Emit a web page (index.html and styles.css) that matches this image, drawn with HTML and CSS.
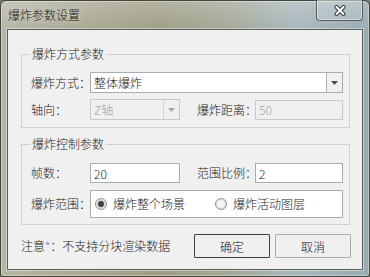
FILE: index.html
```html
<!DOCTYPE html>
<html lang="zh-CN">
<head>
    <meta charset="UTF-8">
    <title>爆炸参数设置</title>
    <link rel="stylesheet" href="styles.css">
</head>
<body>
<div class="window">
    <div class="titlebar">
        <span class="title">爆炸参数设置</span>
        <div class="close-btn">
            <svg width="12" height="11" viewBox="0 0 12 11">
                <path d="M2.5 2 L9.5 9 M9.5 2 L2.5 9" stroke="#3a3c42" stroke-width="4" stroke-linecap="round"/>
                <path d="M2.5 2 L9.5 9 M9.5 2 L2.5 9" stroke="#fff" stroke-width="2" stroke-linecap="round"/>
            </svg>
        </div>
    </div>
    <div class="client">
        <fieldset class="group group-mode">
            <legend>爆炸方式参数</legend>
            <div class="form-grid">
                <label>爆炸方式：</label>
                <div class="combo span-3">
                    <span class="combo-value">整体爆炸</span>
                    <span class="combo-btn">
                        <svg width="7" height="4" viewBox="0 0 7 4"><polygon points="0,0 7,0 3.5,4" fill="#4a4a4a"/></svg>
                    </span>
                </div>
                <label>轴向：</label>
                <div class="combo disabled">
                    <span class="combo-value">Z轴</span>
                    <span class="combo-btn">
                        <svg width="7" height="4" viewBox="0 0 7 4"><polygon points="0,0 7,0 3.5,4" fill="#a8a8a8"/></svg>
                    </span>
                </div>
                <label class="label-right">爆炸距离：</label>
                <input class="textbox" type="text" value="50" disabled>
            </div>
        </fieldset>
        <fieldset class="group group-control">
            <legend>爆炸控制参数</legend>
            <div class="form-grid">
                <label>帧数：</label>
                <input class="textbox" type="text" value="20">
                <label class="label-right">范围比例：</label>
                <input class="textbox" type="text" value="2">
                <label>爆炸范围：</label>
                <div class="radio-box span-3">
                    <label class="radio"><input type="radio" name="range" checked>爆炸整个场景</label>
                    <label class="radio"><input type="radio" name="range">爆炸活动图层</label>
                </div>
            </div>
        </fieldset>
        <div class="footer">
            <span class="note">注意<span class="star">*</span>：不支持分块渲染数据</span>
            <button class="btn btn-default">确定</button>
            <button class="btn">取消</button>
        </div>
    </div>
</div>
</body>
</html>
```

FILE: styles.css
```css
* {
    box-sizing: border-box;
    margin: 0;
    padding: 0;
}

body {
    font-family: "Noto Sans CJK SC", sans-serif;
    font-size: 12px;
    font-weight: 300;
    color: #222;
    background: #6f7a6e;
}

.window {
    width: 370px;
    height: 277px;
    display: flex;
    flex-direction: column;
    border: 1px solid #44463e;
    border-radius: 6px 6px 3px 3px;
    padding: 0 6px 6px 6px;
    background:
        linear-gradient(180deg, rgba(255, 255, 255, .22), rgba(255, 255, 255, 0) 30px),
        linear-gradient(90deg, #b6b6a6 0%, #acab96 18%, #9f9e86 42%, #a3a897 62%, #a9b8bc 80%, #98abb3 100%);
    box-shadow: inset 0 0 0 1px rgba(255, 255, 255, .35);
}

.titlebar {
    height: 28px;
    display: flex;
    align-items: center;
    justify-content: space-between;
}

.title {
    padding: 0 0 1px 1px;
    line-height: 16px;
    color: #151515;
    text-shadow: 0 0 6px rgba(255, 255, 255, .7);
}

.close-btn {
    align-self: flex-start;
    margin-top: -1px;
    width: 47px;
    height: 21px;
    border: 1px solid #5a5c55;
    border-top: none;
    border-radius: 0 0 4px 4px;
    background: rgba(255, 255, 255, .12);
    box-shadow: inset 0 0 0 1px rgba(255, 255, 255, .45);
    display: flex;
    align-items: center;
    justify-content: center;
}

.client {
    flex: 1;
    background-color: #f0f0f0;
    border: 1px solid #5e6057;
    box-shadow: 0 0 0 1px rgba(255, 255, 255, .4);
    padding: 17px 12px 11px 12px;
}

.group {
    margin: 0 0 0 1px;
    border: 1px solid #d0d0d0;
    padding: 11px 6px 7px 9px;
}

.group legend {
    padding: 0 2px;
    margin-left: -1px;
    line-height: 14px;
}

.group-mode {
    margin-bottom: 9px;
}

.group-mode .form-grid {
    row-gap: 6px;
}

.group-control {
    padding-top: 12px;
    padding-bottom: 6px;
}

.group-control .form-grid {
    row-gap: 7px;
}

.form-grid {
    display: grid;
    grid-template-columns: 59px 90px 75px 88px;
    align-items: center;
}

.form-grid label {
    line-height: 14px;
    white-space: nowrap;
}

.form-grid .label-right {
    padding-left: 17px;
}

.span-3 {
    grid-column: span 3;
}

.combo {
    height: 21px;
    display: flex;
    border: 1px solid #a9acb1;
    background-color: #fff;
}

.combo-value {
    flex: 1;
    padding-left: 3px;
    line-height: 19px;
}

.combo-btn {
    width: 16px;
    border-left: 1px solid #b3b5b8;
    background-color: #f0f0f0;
    display: flex;
    align-items: center;
    justify-content: center;
}

.combo.disabled {
    border-color: #c9c9c9;
    background-color: #f0f0f0;
    color: #a3a3a3;
}

.combo.disabled .combo-btn {
    border-left-color: #d2d2d2;
}

.textbox {
    height: 20px;
    width: 100%;
    border: 1px solid #a9acb1;
    background-color: #fff;
    padding: 0 3px;
    font-family: inherit;
    font-size: 12px;
    font-weight: 300;
    color: #222;
    outline: none;
}

.textbox:disabled {
    border-color: #c9c9c9;
    background-color: #f0f0f0;
    color: #a3a3a3;
}

.radio-box {
    height: 28px;
    border: 1px solid #a9acb1;
    background-color: #fff;
    display: grid;
    grid-template-columns: 120px auto;
    align-items: center;
    padding-left: 4px;
}

.radio-box .radio {
    display: flex;
    align-items: center;
    gap: 6px;
}

.radio input {
    appearance: none;
    -webkit-appearance: none;
    width: 12px;
    height: 12px;
    border-radius: 50%;
    border: 1px solid #929292;
    background: radial-gradient(circle, #f4f4f4 0 3px, #e2e2e2 5px);
    margin: 0;
}

.radio input:checked {
    background: radial-gradient(circle, #3f3f3f 0 2px, #6a6a6a 3px, #d8d8d8 3.6px, #ececec 5px);
}

.footer {
    margin-top: 9px;
    margin-right: -1px;
    display: flex;
    align-items: center;
    gap: 5px;
}

.note {
    flex: 1;
    padding-left: 1px;
    line-height: 14px;
}

.star {
    color: #4c7cc4;
}

.btn {
    width: 76px;
    height: 24px;
    border: 1px solid #acacac;
    border-radius: 1px;
    background-color: #efefef;
    font-family: inherit;
    font-size: 12px;
    font-weight: 300;
    color: #222;
}

.btn-default {
    border-color: #3f3f3f;
}
```
